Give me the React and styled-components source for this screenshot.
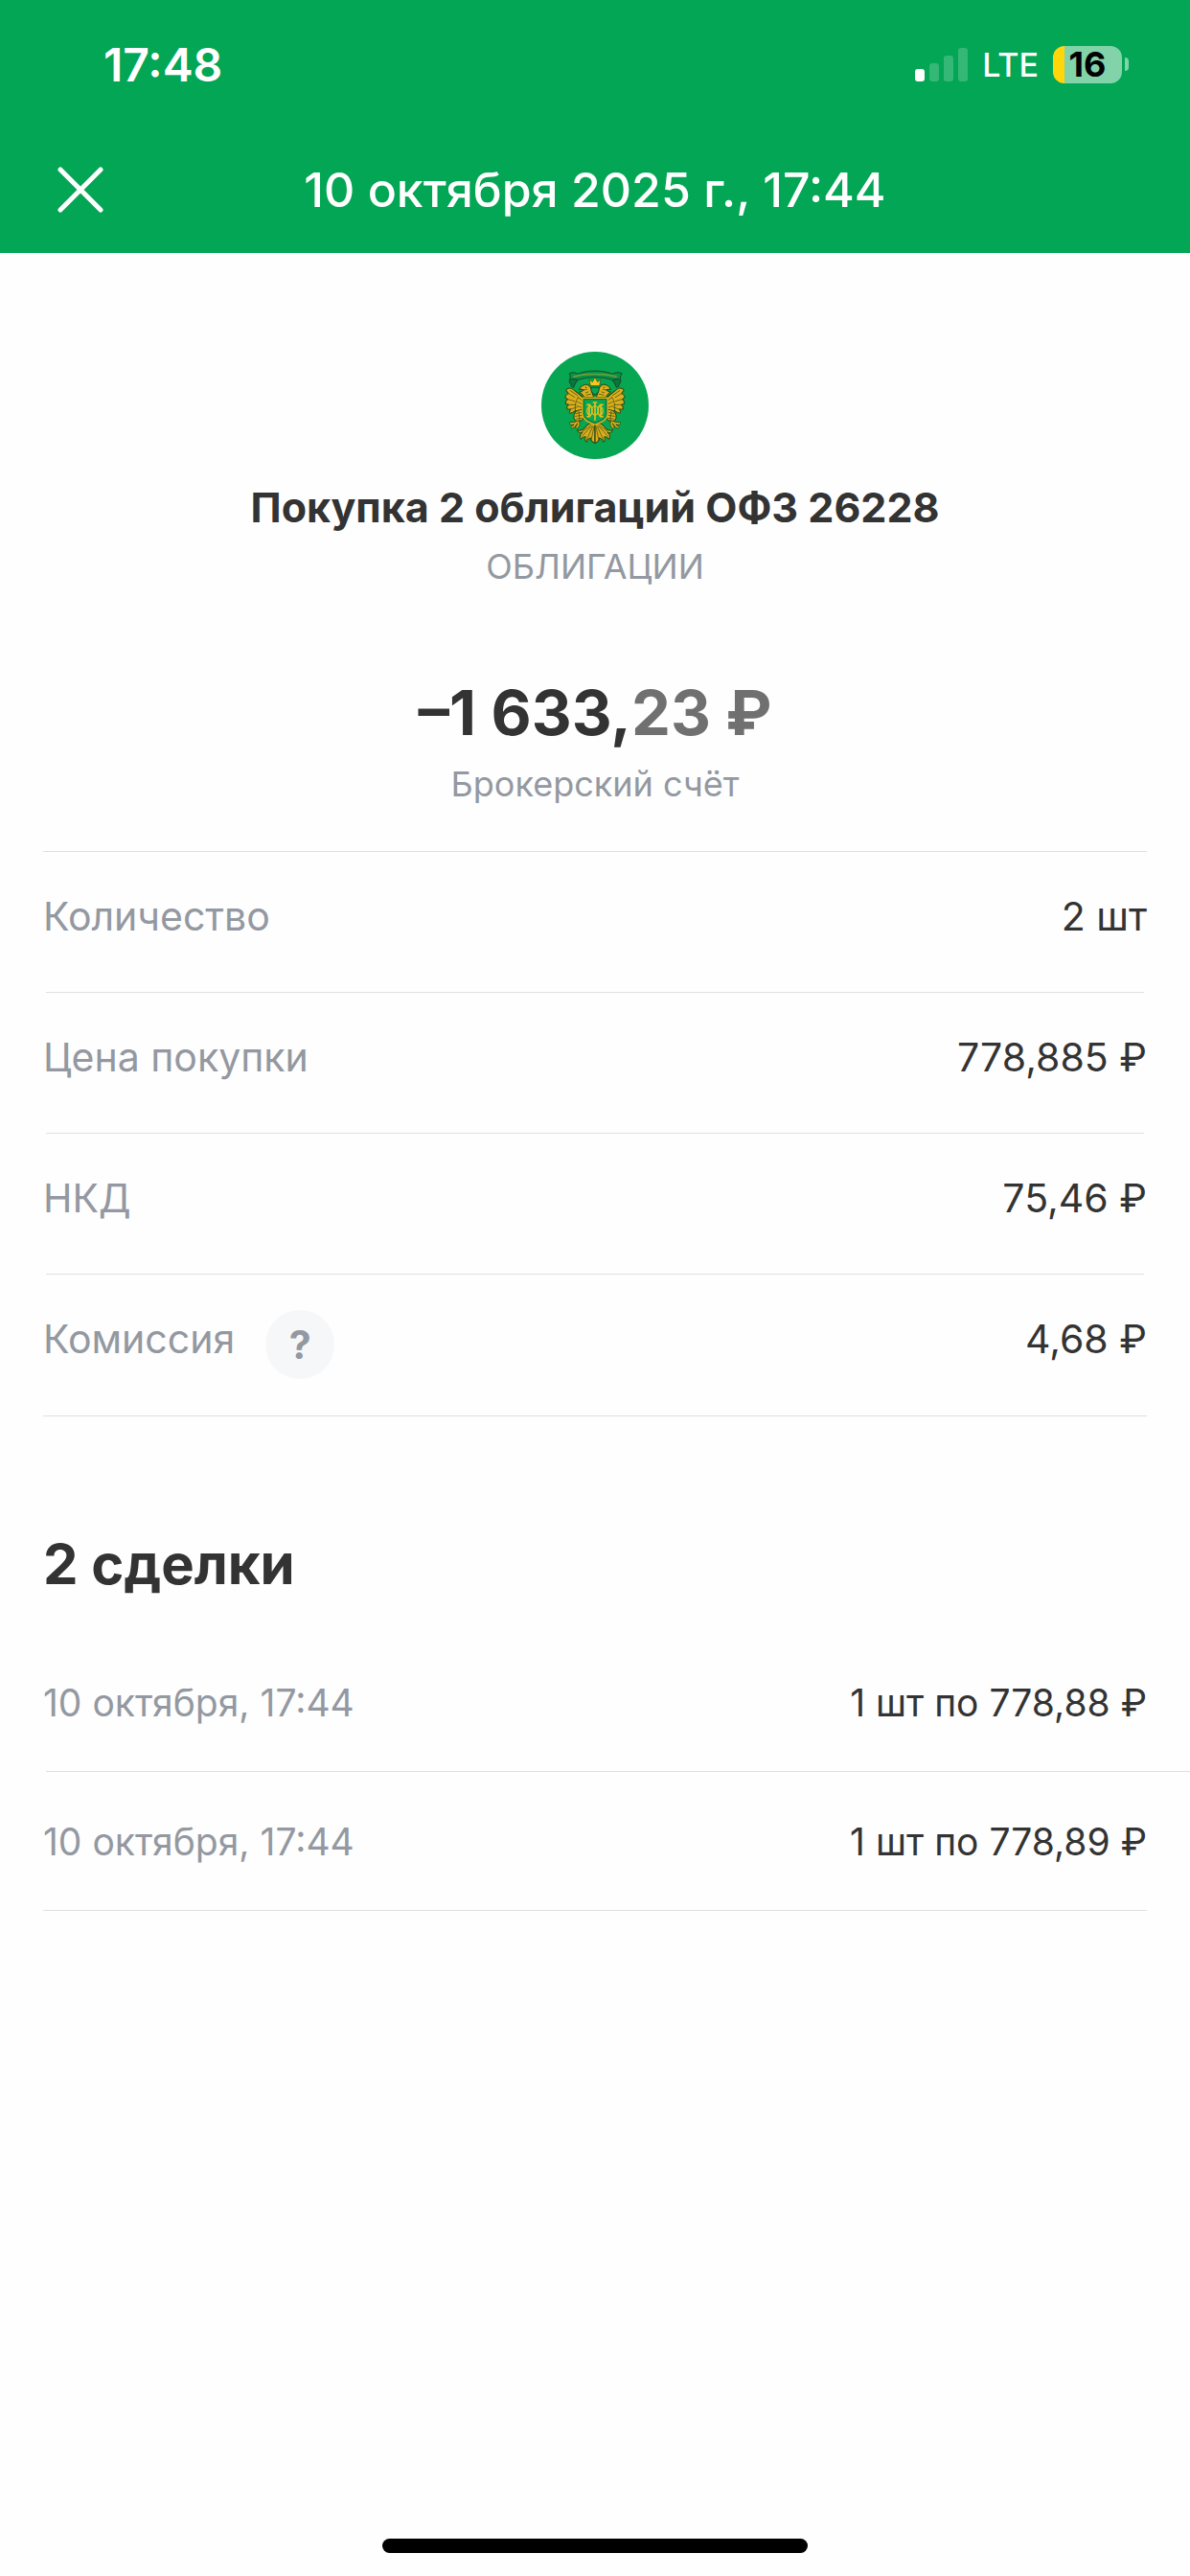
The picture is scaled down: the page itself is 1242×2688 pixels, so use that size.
import React from 'react';
import styled, { createGlobalStyle } from 'styled-components';

const details = [
  { label: 'Количество', value: '2 шт' },
  { label: 'Цена покупки', value: '778,885 ₽' },
  { label: 'НКД', value: '75,46 ₽' },
  { label: 'Комиссия', value: '4,68 ₽', help: true },
];

const trades = [
  { date: '10 октября, 17:44', value: '1 шт по 778,88 ₽' },
  { date: '10 октября, 17:44', value: '1 шт по 778,89 ₽' },
];

// half of the eagle, drawn twice (the second time mirrored)
function EagleHalf() {
  return (
    <g stroke="#2f4a10" strokeWidth="3" strokeLinejoin="round" strokeLinecap="round">
      <path fill="#dcae1d" d="M178 182 C172 174 164 168 156 162 C150 157 144 152 136 149 C129 149 124 152 123 157 C126 160 129 162 130 166 C125 168 121 172 120 178 C123 180 126 182 128 184 C123 187 121 192 122 198 C126 199 129 200 131 201 C126 205 124 210 126 215 C130 215 134 215 137 215 C134 219 133 223 135 228 C142 226 148 223 152 219 C156 224 162 225 168 222 L178 214 Z" />
      <path fill="none" strokeWidth="2" d="M130 166 L150 178 M128 184 L150 190 M131 201 L153 201 M137 215 L156 209 M136 157 L158 172 M152 219 C150 206 152 190 160 178 M160 178 L176 190 M158 192 L175 200 M157 205 L174 210" />
      <path fill="#dcae1d" d="M209 178 C206 170 203 162 202 154 C200 144 192 137 184 138 C178 138 176 142 172 143 C168 145 166 149 164 154 C170 152 174 153 178 155 C174 159 170 161 165 161 L172 168 L180 178 Z" />
      <path fill="none" strokeWidth="2" d="M178 155 L188 153 M184 164 L192 161 M186 171 L200 168" />
      <circle cx="185" cy="147" r="2" fill="#2f4a10" stroke="none" />
      <path fill="#dcae1d" d="M174 216 C160 217 148 224 147 236 C147 244 150 250 155 252 L170 251 C177 247 179 236 178 226 Z" />
      <path fill="none" strokeWidth="2" d="M153 229 L170 225 M151 237 L172 234 M155 245 L172 243 M162 220 L166 250" />
      <path fill="none" stroke="#2f4a10" strokeWidth="9" d="M160 254 C154 258 146 260 137 259 M154 259 C152 264 148 268 142 271 M161 256 C163 262 161 267 156 271" />
      <path fill="none" stroke="#dcae1d" strokeWidth="5" d="M160 254 C154 258 146 260 137 259 M154 259 C152 264 148 268 142 271 M161 256 C163 262 161 267 156 271" />
      <path fill="#dcae1d" d="M212 261 C199 256 189 262 183 271 C176 279 167 284 158 279 C159 287 167 291 174 287 C166 293 164 301 170 308 C174 302 180 300 184 301 C181 307 182 313 187 317 C189 310 194 306 199 304 C199 311 204 317 213 321 L213 261 Z" />
      <path fill="none" strokeWidth="2" d="M203 266 L172 300 M206 268 L187 310 M210 268 L201 312 M199 266 L172 286" />
    </g>
  );
}

function Emblem() {
  return (
    <EmblemSvg viewBox="46 36 334 334" role="img" aria-label="ОФЗ">
      <circle cx="213" cy="203" r="167" fill="#07a652" />
      <EagleHalf />
      <g transform="matrix(-1 0 0 1 426 0)">
        <EagleHalf />
      </g>
      <g stroke="#174f2a" strokeWidth="3" strokeLinejoin="round">
        <path fill="#07793c" d="M136 120 C130 127 133 132 139 137 C137 143 140 147 146 147 C149 138 154 130 160 123 Z M290 120 C296 127 293 132 287 137 C289 143 286 147 280 147 C277 138 272 130 266 123 Z" />
        <path fill="#07924a" d="M133 104 C142 98 151 101 159 105 C178 98 196 96 213 96 C230 96 248 98 267 105 C276 101 285 98 297 104 C292 110 291 116 292 123 C283 120 275 121 266 123 C248 117 230 115 213 115 C196 115 178 117 160 123 C151 121 143 120 136 123 C137 116 136 110 133 104 Z" />
        <path fill="none" stroke="#a3a52d" strokeWidth="5" strokeDasharray="4 2" d="M146 114 C166 108 190 106 213 106 C236 106 260 108 280 114" />
        <path fill="#f7c81d" strokeWidth="2" d="M199 142 L195 122 L205 130 L213 115 L221 130 L231 122 L227 142 Z" />
        <path fill="#07a652" d="M201 147 H225 C227 158 222 166 213 171 C204 166 199 158 201 147 Z" />
        <path fill="#07a652" stroke="#dcae1d" strokeWidth="4" d="M174 180 H252 V230 C251 247 237 254 213 263 C189 254 175 247 174 230 Z" />
        <path fill="none" strokeWidth="2" d="M178 184 H248 V230 C246 243 235 250 213 258 C191 250 180 243 178 230 Z" />
      </g>
      <g fill="none" stroke="#eabd1c" strokeWidth="5">
        <path d="M195 201 V238 M231 201 V238 M213 194 V250 M187 201 H199 M227 201 H239 M187 238 H199 M227 238 H239 M206 194 H220" />
        <path strokeWidth="4" d="M195 203 C206 205 208 232 195 237 M231 203 C220 205 218 232 231 237 M195 207 C186 212 186 228 195 233 M231 207 C240 212 240 228 231 233" />
        <ellipse cx="213" cy="219" rx="10" ry="14" strokeWidth="4" />
      </g>
      <path fill="none" stroke="#2f4a10" strokeWidth="2" d="M213 265 V318" />
    </EmblemSvg>
  );
}

function App() {
  return (
    <Page>
      <GlobalStyle />
      <Header>
        <StatusBar>
          <Clock>17:48</Clock>
          <StatusIcons>
            <Signal viewBox="0 0 55 35" aria-hidden="true">
              <rect x="0" y="22" width="10" height="13" rx="3" />
              <rect x="15" y="16" width="10" height="19" rx="3" opacity="0.2" />
              <rect x="30" y="8" width="10" height="27" rx="3" opacity="0.2" />
              <rect x="45" y="0" width="10" height="35" rx="3" opacity="0.2" />
            </Signal>
            <Network>LTE</Network>
            <Battery>
              <Charge>16</Charge>
              <Nub />
            </Battery>
          </StatusIcons>
        </StatusBar>
        <NavBar>
          <CloseButton type="button" aria-label="Закрыть">
            <svg width="48" height="48" viewBox="0 0 48 48" aria-hidden="true">
              <path d="M3 3 L45 45 M45 3 L3 45" stroke="#fff" strokeWidth="5" strokeLinecap="round" />
            </svg>
          </CloseButton>
          <NavTitle>10 октября 2025 г., 17:44</NavTitle>
        </NavBar>
      </Header>
      <main>
        <Summary>
          <Emblem />
          <Title>Покупка 2 облигаций ОФЗ 26228</Title>
          <Caption>ОБЛИГАЦИИ</Caption>
          <Amount>
            –1&nbsp;633,<Cents>23 ₽</Cents>
          </Amount>
          <Caption>Брокерский счёт</Caption>
        </Summary>
        <Details>
          {details.map((item) => (
            <DetailRow key={item.label}>
              <Label>
                {item.label}
                {item.help && <HelpButton type="button" aria-label="О комиссии">?</HelpButton>}
              </Label>
              <Value>{item.value}</Value>
            </DetailRow>
          ))}
        </Details>
        <SectionTitle>2 сделки</SectionTitle>
        <Trades>
          {trades.map((trade) => (
            <TradeRow key={trade.value}>
              <TradeDate>{trade.date}</TradeDate>
              <span>{trade.value}</span>
            </TradeRow>
          ))}
        </Trades>
      </main>
      <HomeIndicator />
    </Page>
  );
}

export default App;

const GlobalStyle = createGlobalStyle`
* {
  box-sizing: border-box;
}
body {
  margin: 0;
  background: #fefefe;
  color: #333;
  font-family: Inter, "Liberation Sans", sans-serif;
}
button {
  padding: 0;
  border: 0;
  font-family: inherit;
  cursor: pointer;
}
`

const Page = styled.div`
display: flex;
flex-direction: column;
min-height: 100vh;
`

const Header = styled.header`
background: #03a654;
color: white;
`

const StatusBar = styled.div`
display: flex;
justify-content: space-between;
align-items: center;
height: 134px;
padding: 0 64px 0 108px;
`

const Clock = styled.span`
font-size: 48px;
font-weight: 600;
`

const StatusIcons = styled.div`
display: flex;
align-items: center;
gap: 15px;
`

const Signal = styled.svg`
width: 55px;
height: 35px;
fill: white;
`

const Network = styled.span`
font-size: 34px;
font-weight: 500;
`

const Battery = styled.div`
display: flex;
align-items: center;
gap: 3px;
`

const Charge = styled.div`
width: 72px;
height: 39px;
border-radius: 12px;
background: linear-gradient(to right, #ffd60a 12px, #82d3aa 12px);
color: black;
font-size: 36px;
font-weight: 700;
line-height: 39px;
text-align: center;
`

const Nub = styled.div`
width: 4px;
height: 14px;
border-radius: 0 4px 4px 0;
background: #82d3aa;
`

const NavBar = styled.div`
display: grid;
grid-template-columns: 120px 1fr 120px;
align-items: center;
height: 130px;
padding-bottom: 2px;
`

const CloseButton = styled.button`
display: flex;
justify-content: center;
padding-left: 48px;
background: none;
`

const NavTitle = styled.h1`
margin: 0;
font-size: 50px;
font-weight: 500;
text-align: center;
`

const Summary = styled.section`
display: flex;
flex-direction: column;
align-items: center;
gap: 10px;
padding: 103px 48px 46px;
`

const EmblemSvg = styled.svg`
width: 112px;
height: 112px;
`

const Title = styled.h2`
margin: 12px 0 0;
font-size: 43px;
font-weight: 700;
line-height: 56px;
`

const Caption = styled.p`
margin: 0;
color: #9398a1;
font-size: 36px;
line-height: 48px;
`

const Amount = styled.p`
margin: 79px 0 0;
font-size: 65px;
font-weight: 700;
line-height: 80px;
`

const Cents = styled.span`
color: #707070;
`

const Details = styled.dl`
margin: 0 45px;
border: solid #dfe0e1;
border-width: 1px 0;
`

const DetailRow = styled.div`
display: flex;
justify-content: space-between;
min-height: 147px;
padding: 37px 0;
font-size: 41px;
line-height: 60px;
/* divider sits a little inside the outer lines */
&:not(:last-child) {
  background: linear-gradient(#dfe0e1, #dfe0e1) bottom / calc(100% - 6px) 1px no-repeat;
}
`

const Label = styled.dt`
display: flex;
gap: 32px;
color: #9398a1;
`

const Value = styled.dd`
margin: 0;
`

const HelpButton = styled.button`
width: 72px;
height: 72px;
border-radius: 50%;
background: #f6f7f8;
color: #9398a1;
font-size: 41px;
font-weight: 700;
`

const SectionTitle = styled.h2`
margin: 114px 45px 32px;
font-size: 58px;
font-weight: 700;
line-height: 80px;
`

const Trades = styled.ul`
margin: 0 45px;
padding: 0;
border-bottom: 1px solid #dfe0e1;
list-style: none;
`

const TradeRow = styled.li`
display: flex;
justify-content: space-between;
align-items: center;
height: 144px;
font-size: 39px;
/* the inner divider runs out to the screen edge */
&:not(:last-child) {
  height: 145px;
  margin-right: -45px;
  padding-right: 45px;
  background: linear-gradient(#dfe0e1, #dfe0e1) bottom right / calc(100% - 3px) 1px no-repeat;
}
`

const TradeDate = styled.time`
color: #9398a1;
`

const HomeIndicator = styled.div`
width: 444px;
height: 15px;
margin: auto auto 24px;
border-radius: 8px;
background: black;
`
